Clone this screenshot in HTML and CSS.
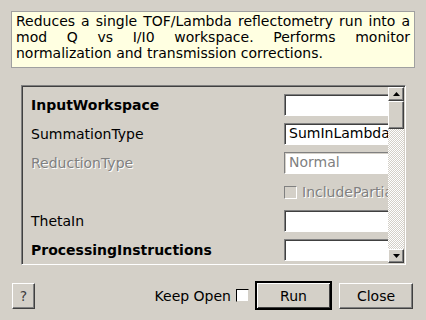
FILE: index.html
```html
<!DOCTYPE html>
<html lang="en">

<head>
    <meta charset="UTF-8">
    <title>ReflectometryReductionOne</title>
    <link rel="stylesheet" href="styles.css">
</head>

<body>
    <div class="desc">
        Reduces a single TOF/Lambda reflectometry run into a mod Q vs I/I0 workspace. Performs monitor normalization and transmission corrections.
    </div>

    <div class="panel">
        <div class="props">
            <div class="row">
                <span class="label bold">InputWorkspace</span>
                <span class="field"></span>
            </div>
            <div class="row">
                <span class="label">SummationType</span>
                <span class="field">SumInLambda</span>
            </div>
            <div class="row">
                <span class="label disabled">ReductionType</span>
                <span class="field off">Normal</span>
            </div>
            <div class="row">
                <span class="label"></span>
                <span class="check-field"><span class="box"></span><span class="disabled">IncludePartia</span></span>
            </div>
            <div class="row">
                <span class="label">ThetaIn</span>
                <span class="field"></span>
            </div>
            <div class="row">
                <span class="label bold">ProcessingInstructions</span>
                <span class="field"></span>
            </div>
        </div>
        <div class="scrollbar">
            <div class="arrow up"><svg width="7" height="4" viewBox="0 0 7 4"><path d="M3.5 0 L7 4 L0 4 Z" fill="#000"/></svg></div>
            <div class="slider"></div>
            <div class="trough"></div>
            <div class="arrow down"><svg width="7" height="4" viewBox="0 0 7 4"><path d="M0 0 L7 0 L3.5 4 Z" fill="#000"/></svg></div>
        </div>
    </div>

    <div class="footer">
        <button class="btn help">?</button>
        <span class="spacer"></span>
        <span class="keep">Keep Open</span>
        <span class="keep-box"></span>
        <button class="btn run">Run</button>
        <button class="btn close">Close</button>
    </div>
</body>

</html>
```

FILE: styles.css
```css
body {
    margin: 0;
    background: #d4d0c8;
    font-family: "DejaVu Sans", sans-serif;
    font-size: 14px;
    color: #000;
    width: 426px;
    height: 320px;
    overflow: hidden;
}

.desc {
    margin: 11px 11px 0 11px;
    height: 54px;
    box-sizing: content-box;
    padding: 1px 4px 0 4px;
    border: 1px solid #a0a0a0;
    background: #ffffe1;
    line-height: 16px;
    text-align: justify;
}

.panel {
    margin: 17px 20px 0 21px;
    height: 176px;
    display: flex;
    border: 1px solid;
    border-color: #808080 #fff #fff #808080;
    box-shadow: inset 1px 1px #404040;
    padding: 1px 1px 1px 1px;
}

.props {
    flex: 1;
    overflow: hidden;
    padding: 7px 0 0 8px;
    display: flex;
    flex-direction: column;
    gap: 7px;
}

.row {
    display: flex;
    align-items: center;
    height: 22px;
    flex-shrink: 0;
}

.label {
    width: 253px;
    flex-shrink: 0;
}

.bold {
    font-weight: bold;
}

.disabled {
    color: #808080;
    text-shadow: 1px 1px #fff;
}

.field {
    flex-shrink: 0;
    width: 130px;
    height: 22px;
    box-sizing: border-box;
    border: 1px solid;
    border-color: #808080 #fff #fff #808080;
    box-shadow: inset 1px 1px #404040;
    background: #fff;
    padding: 1px 0 0 4px;
    white-space: nowrap;
}

.field.off {
    color: #808080;
    box-shadow: inset 1px 1px #d4d0c8;
}

.check-field {
    display: flex;
    align-items: center;
    gap: 5px;
    white-space: nowrap;
}

.box {
    width: 11px;
    height: 11px;
    border: 1px solid;
    border-color: #808080 #fff #fff #808080;
    background: #d4d0c8;
}

.scrollbar {
    width: 16px;
    flex-shrink: 0;
    display: flex;
    flex-direction: column;
}

.arrow {
    height: 14px;
    box-sizing: border-box;
    border: 1px solid;
    border-color: #fff #404040 #404040 #fff;
    box-shadow: inset -1px -1px #808080;
    background: #d4d0c8;
    display: flex;
    align-items: center;
    justify-content: center;
}

.slider {
    height: 28px;
    box-sizing: border-box;
    border: 1px solid;
    border-color: #fff #404040 #404040 #fff;
    box-shadow: inset -1px -1px #808080;
    background: #d4d0c8;
}

.trough {
    flex: 1;
    background: repeating-conic-gradient(#fff 0 25%, #d4d0c8 0 50%) 0 0 / 2px 2px;
}

.footer {
    display: flex;
    align-items: center;
    margin: 16px 13px 0 12px;
    height: 29px;
}

.spacer {
    flex: 1;
}

.btn {
    font-family: "DejaVu Sans", sans-serif;
    font-size: 14px;
    background: #d4d0c8;
    border: 1px solid;
    border-color: #fff #404040 #404040 #fff;
    box-shadow: inset -1px -1px #808080;
    height: 26px;
    padding: 0;
    color: #000;
}

.help {
    width: 23px;
    color: #404040;
}

.keep {
    margin-right: 5px;
}

.keep-box {
    width: 11px;
    height: 11px;
    border: 1px solid;
    border-color: #000 #d4d0c8 #d4d0c8 #000;
    background: #fff;
    margin-right: 6px;
}

.run {
    width: 77px;
    height: 29px;
    border-width: 2px;
    border-color: #000;
    box-shadow: inset 1px 1px #fff, inset -1px -1px #404040;
    margin-right: 7px;
}

.close {
    width: 74px;
}
```
